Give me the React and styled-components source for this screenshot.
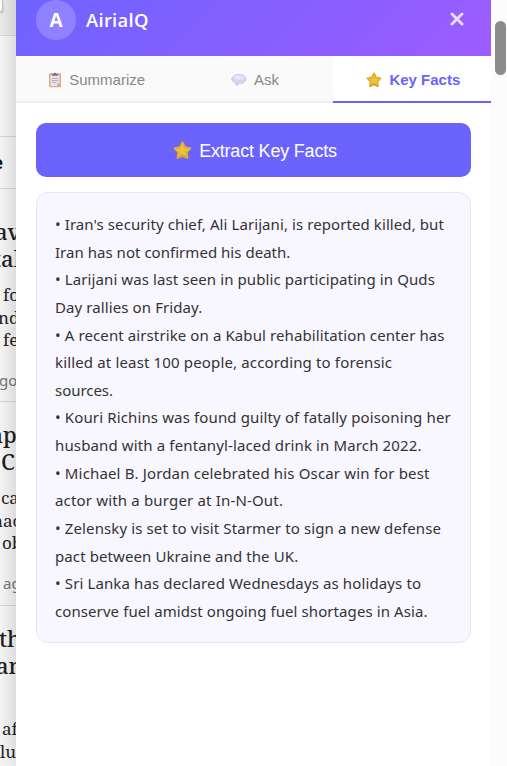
import React from "react";
import styled, { createGlobalStyle } from "styled-components";

const Global = createGlobalStyle`
  * { box-sizing: border-box; }
  html, body { margin: 0; height: 766px; overflow: hidden; background: #fff; }
  button { margin: 0; padding: 0; border: 0; background: none; font: inherit; }
`;

const Page = styled.div`
  display: grid;
  grid-template-columns: 16px 475px 16px;
  width: 507px;
  height: 766px;
  overflow: hidden;
`;

const Strip = styled.aside`
  height: 766px;
  overflow: hidden;
  background: #f8f8f8;
  color: #222;
`;

const SiteBar = styled.div`
  height: 36px;
  background: #eeeeee;
  border-bottom: 1px solid #dcdcdc;
`;

const SearchEdge = styled.div`
  width: 3px;
  height: 12px;
  background: #fff;
  border: 1px solid #ccc;
  border-width: 0 1px 1px 0;
  border-radius: 0 0 5px 0;
  box-shadow: 0 1px 2px rgba(0, 0, 0, 0.3);
`;

const StripRow = styled.div`
  height: ${(p) => p.$h}px;
  padding-top: ${(p) => p.$top || 0}px;
  border-bottom: 1px solid #d8d8d8;
  overflow: hidden;
`;

const Fragment = styled.div`
  width: 60px;
  white-space: nowrap;
  margin-left: ${(p) => p.$x}px;
`;

const NavWord = styled(Fragment)`
  font: 700 17px/24px "Open Sans", sans-serif;
  color: #111;
`;

const Headline = styled(Fragment)`
  font: 500 22px/27px "Noto Serif", "DejaVu Serif", serif;
  height: 27px;
`;

const Body = styled.div`
  padding-top: ${(p) => p.$top}px;
`;

const Copy = styled(Fragment)`
  font: 400 17px/22.5px "Noto Serif", "DejaVu Serif", serif;
`;

const Meta = styled(Fragment)`
  margin-top: 17px;
  font: 400 15px/22px "Noto Sans", sans-serif;
  color: #777;
`;

const Panel = styled.main`
  position: relative;
  height: 783px;
  margin-top: -17px;
  background: #fff;
`;

const PanelShade = styled(Panel)`
  box-shadow: -4px 0 20px rgba(0, 0, 0, 0.17);
  clip-path: inset(0 0 0 -40px);
`;

const Header = styled.header`
  display: flex;
  align-items: center;
  height: 73px;
  padding: 0 20px;
  background: linear-gradient(135deg, #6c63ff, #9d5cff);
  color: #fff;
`;

const Avatar = styled.div`
  display: grid;
  place-items: center;
  width: 40px;
  height: 40px;
  margin-right: 10px;
  border-radius: 50%;
  background: rgba(255, 255, 255, 0.2);
  font: 700 19px/26px "Open Sans", sans-serif;
`;

const Brand = styled.div`
  flex: 1;
  font: 650 18.4px/26px "Open Sans", sans-serif;
  letter-spacing: 0.3px;
`;

const Close = styled.button`
  display: grid;
  place-items: center;
  width: 28px;
  height: 28px;
  margin-top: -2px;
`;

const Tabs = styled.nav`
  display: grid;
  grid-template-columns: repeat(3, 1fr);
  height: 47px;
`;

const Tab = styled.button`
  display: flex;
  align-items: center;
  justify-content: center;
  gap: 7px;
  padding: 3px 0 0 3px;
  border-bottom: 2px solid ${(p) => (p.$active ? "#6c63ff" : "#eeeeee")};
  background: ${(p) => (p.$active ? "#fff" : "#fafafa")};
  color: ${(p) => (p.$active ? "#6c63ff" : "#888")};
  font: ${(p) => (p.$active ? 700 : 400)} 15px/18px "Liberation Sans", Arial, sans-serif;
`;

const Content = styled.section`
  padding: 20px;
`;

const Extract = styled.button`
  display: flex;
  align-items: center;
  justify-content: center;
  gap: 7px;
  width: 100%;
  height: 54px;
  padding: 1px 0 0 3px;
  border-radius: 10px;
  background: #6c63ff;
  color: #fff;
  font: 400 18px/24px "Liberation Sans", Arial, sans-serif;
  letter-spacing: -0.2px;
`;

const Facts = styled.div`
  height: 451px;
  margin-top: 15px;
  padding: 18px;
  border: 1px solid #e8e4ff;
  border-radius: 12px;
  background: #f8f7ff;
  color: #333;
  font: 400 15px/27.64px "Noto Sans", sans-serif;
`;

const Line = styled.div`
  white-space: nowrap;
  letter-spacing: ${(p) => p.$ls}px;
`;

const ScrollTrack = styled.div`
  padding: 21px 0 0 4px;
  background: #fcfcfc;
`;

const ScrollThumb = styled.div`
  width: 11px;
  height: 54px;
  border-radius: 6px;
  background: #8b8b8b;
`;

const Star = ({ size }) => (
  <svg width={size} height={size} viewBox="0 0 18 18">
    <path d="M9 1.800 11.100 6.200l5 .8-3.500 3.600.8 5.200L9 13.700l-4.400 2.100.8-5.200L1.900 7l5-.8Z" fill="#e6b92f" stroke="#e0b02c" strokeWidth="2.400" strokeLinejoin="round" />
    <path d="M9 3 10.800 7l4.500.7-3.300 2.800.5 3-3.500-1.500-3.500 1.500.6-3L2.900 7.700 7.200 7Z" fill="#ebc33c" />
    <path d="m4.600 16 4.400-2.100 4.400 2.100" fill="none" stroke="#c99a28" strokeWidth=".9" strokeLinejoin="round" />
  </svg>
);

const Clipboard = () => (
  <svg width="14" height="16" viewBox="0 0 14 16">
    <rect x="1" y="1.200" width="12" height="14" rx="1" fill="#e2a878" />
    <path d="M2.500 3h9v8.500l-2.500 2.500H2.500Z" fill="#e9e1f2" />
    <path d="M9 14v-2.500h2.500Z" fill="#b9a6c9" />
    <path d="M4 6.500h6M4 8.500h6M4 10.500h4" stroke="#b3a5c2" strokeWidth=".9" />
    <path d="M4 3.800V2h1.700a1.300 1.300 0 0 1 2.600 0H10v1.800Z" fill="#77707f" />
  </svg>
);

const Bubble = () => (
  <svg width="16" height="14" viewBox="0 0 16 14">
    <path d="M8 1.500c4 0 7 1.900 7 4.500s-3 4.500-6.500 4.500L5 12.500 4.800 10C2.300 9.400.8 7.800.8 6 .8 3.400 4 1.500 8 1.500Z" fill="#ddd2ea" stroke="#cabcd9" strokeWidth=".8" />
    <ellipse cx="8" cy="4.500" rx="5" ry="2.200" fill="#ebe3f3" />
  </svg>
);

const facts = [
  ["• Iran's security chief, Ali Larijani, is reported killed, but", 0.085],
  ["Iran has not confirmed his death.", 0.03],
  ["• Larijani was last seen in public participating in Quds", 0.105],
  ["Day rallies on Friday.", 0.1],
  ["• A recent airstrike on a Kabul rehabilitation center has", 0.105],
  ["killed at least 100 people, according to forensic", 0.15],
  ["sources.", -0.05],
  ["• Kouri Richins was found guilty of fatally poisoning her", 0.135],
  ["husband with a fentanyl-laced drink in March 2022.", 0.135],
  ["• Michael B. Jordan celebrated his Oscar win for best", 0.155],
  ["actor with a burger at In-N-Out.", 0.17],
  ["• Zelensky is set to visit Starmer to sign a new defense", 0.12],
  ["pact between Ukraine and the UK.", 0.1],
  ["• Sri Lanka has declared Wednesdays as holidays to", 0.12],
  ["conserve fuel amidst ongoing fuel shortages in Asia.", 0.085],
];

export default function App() {
  return (
    <>
      <Global />
      <Page>
        <Strip>
          <SiteBar><SearchEdge /></SiteBar>
          <StripRow $h={101} />
          <StripRow $h={52} $top={14}><NavWord $x={-7}>e</NavWord></StripRow>
          <StripRow $h={213} $top={29}>
            <Headline $x={-5}>av</Headline>
            <Headline $x={-7}>tal</Headline>
            <Body $top={12}>
              <Copy $x={3}>fo</Copy>
              <Copy $x={-2}>nd</Copy>
              <Copy $x={3}>fe</Copy>
              <Meta $x={-1}>go</Meta>
            </Body>
          </StripRow>
          <StripRow $h={204} $top={19}>
            <Headline $x={-18}>mp</Headline>
            <Headline $x={1}>C</Headline>
            <Body $top={12}>
              <Copy $x={1}>ca</Copy>
              <Copy $x={-8}>nac</Copy>
              <Copy $x={2}>ob</Copy>
              <Meta $x={3}>ago</Meta>
            </Body>
          </StripRow>
          <StripRow $h={180} $top={19}>
            <Headline $x={-1}>th</Headline>
            <Headline $x={-4}>an</Headline>
            <Body $top={39}>
              <Copy $x={2}>af</Copy>
              <Copy $x={0}>lu</Copy>
            </Body>
          </StripRow>
        </Strip>
        <PanelShade>
          <Header>
            <Avatar>A</Avatar>
            <Brand>AirialQ</Brand>
            <Close aria-label="Close">
              <svg width="14" height="14" viewBox="0 0 14 14">
                <path d="m2 2 10 10M12 2 2 12" stroke="#eadcff" strokeWidth="2.900" strokeLinecap="round" />
              </svg>
            </Close>
          </Header>
          <Tabs>
            <Tab><Clipboard />Summarize</Tab>
            <Tab><Bubble />Ask</Tab>
            <Tab $active><Star size={16} />Key Facts</Tab>
          </Tabs>
          <Content>
            <Extract><Star size={19} />Extract Key Facts</Extract>
            <Facts>
              {facts.map(([text, ls]) => <Line key={text} $ls={ls}>{text}</Line>)}
            </Facts>
          </Content>
        </PanelShade>
        <ScrollTrack><ScrollThumb /></ScrollTrack>
      </Page>
    </>
  );
}
